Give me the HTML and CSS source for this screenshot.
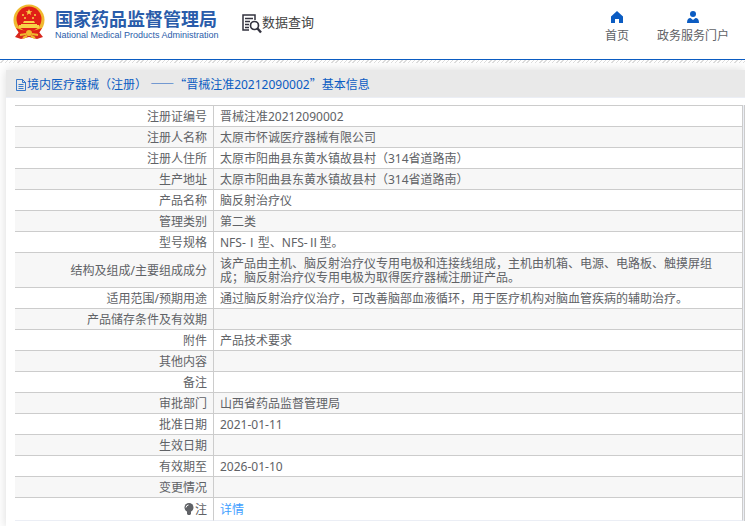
FILE: index.html
```html
<!DOCTYPE html>
<html lang="zh-CN">
<head>
    <meta charset="UTF-8">
    <title>国家药品监督管理局 数据查询</title>
    <link rel="stylesheet" href="styles.css">
</head>
<body>
    <header class="header">
        <a class="brand" href="#">
            <svg class="emblem" viewBox="0 0 34 36">
                <path d="M7 28 L3 33 L9 35 L17 33 L25 35 L31 33 L27 28 Z" fill="#d8261c"/>
                <circle cx="17" cy="16" r="15.500" fill="#f0b92f"/>
                <circle cx="17" cy="15" r="12.500" fill="#e01f17"/>
                <path d="M17 5 l1 2.200 h2.400 l-2 1.500 .8 2.400 -2.200 -1.500 -2.200 1.500 .8 -2.400 -2 -1.500 h2.400z" fill="#f8d348"/>
                <g fill="#f8d348">
                    <circle cx="11" cy="11" r="1"/>
                    <circle cx="23" cy="11" r="1"/>
                    <circle cx="13" cy="14" r="1"/>
                    <circle cx="21" cy="14" r="1"/>
                    <path d="M12 17 h10 l1 2 h-12z M9 20 h16 v1 h2 v3 h-20 v-3 h2z"/>
                </g>
                <path d="M4 24 Q17 30 30 24 L27 29 Q17 33 7 29 Z" fill="#e01f17"/>
                <circle cx="17" cy="29" r="3" fill="#f0b92f"/>
                <path d="M8 31 L14 30 M20 30 L26 31 M11 34 L15 32 M19 32 L23 34" stroke="#f0b92f" stroke-width="2"/>
            </svg>
            <span class="brand-text">
                <span class="brand-zh">国家药品监督管理局</span>
                <span class="brand-en">National Medical Products Administration</span>
            </span>
        </a>
        <a class="query" href="#">
            <svg class="query-icon" viewBox="0 0 20 20" fill="none" stroke="#33333f">
                <path d="M7 16 H1 V1 H13 V6" stroke-width="1.500"/>
                <path d="M3 4.500 H11 M3 7.500 H8 M3 10.500 H7 M3 13.500 H7" stroke-width="1.300"/>
                <circle cx="12.500" cy="11.500" r="4" stroke-width="1.700"/>
                <path d="M15.500 14.500 L19 18.500" stroke-width="2.400"/>
            </svg>
            <span>数据查询</span>
        </a>
        <nav class="nav">
            <a href="#">
                <svg viewBox="0 0 12 12"><path d="M6 0 L12 5.500 V12 H8 V8 H4 V12 H0 V5.500 Z" fill="#0b5cc2"/></svg>
                <span>首页</span>
            </a>
            <a href="#">
                <svg viewBox="0 0 12 12"><circle cx="6" cy="3" r="3" fill="#0b5cc2"/><path d="M0 12 Q0 7 3.500 7 L6 9 L8.500 7 Q12 7 12 12 Z" fill="#0b5cc2"/></svg>
                <span>政务服务门户</span>
            </a>
        </nav>
    </header>
    <div class="stripe"></div>

    <main class="card">
        <h1 class="title">
            <svg class="doc-icon" viewBox="0 0 12 12" fill="none" stroke="#0b5cc2">
                <path d="M1.500 .5 H7.500 L10.500 3.500 V11.500 H1.500 Z M7.500 .5 V3.500 H10.500 M3.500 5.500 H8.500 M3.500 7.500 H8.500 M3.500 9.500 H8.500" stroke-width=".8"/>
            </svg>
            <span>境内医疗器械（注册） <span class="zh">——“</span>晋械注准20212090002<span class="zh">”</span>基本信息</span>
        </h1>
        <div class="table-wrap">
            <table class="info">
                <tr><th scope="row">注册证编号</th><td>晋械注准20212090002</td></tr>
                <tr><th scope="row">注册人名称</th><td>太原市怀诚医疗器械有限公司</td></tr>
                <tr><th scope="row">注册人住所</th><td>太原市阳曲县东黄水镇故县村（314省道路南）</td></tr>
                <tr><th scope="row">生产地址</th><td>太原市阳曲县东黄水镇故县村（314省道路南）</td></tr>
                <tr><th scope="row">产品名称</th><td>脑反射治疗仪</td></tr>
                <tr><th scope="row">管理类别</th><td>第二类</td></tr>
                <tr><th scope="row">型号规格</th><td>NFS-Ⅰ型、NFS-Ⅱ型。</td></tr>
                <tr><th scope="row">结构及组成/主要组成成分</th><td>该产品由主机、脑反射治疗仪专用电极和连接线组成，主机由机箱、电源、电路板、触摸屏组成；脑反射治疗仪专用电极为取得医疗器械注册证产品。</td></tr>
                <tr><th scope="row">适用范围/预期用途</th><td>通过脑反射治疗仪治疗，可改善脑部血液循环，用于医疗机构对脑血管疾病的辅助治疗。</td></tr>
                <tr><th scope="row">产品储存条件及有效期</th><td></td></tr>
                <tr><th scope="row">附件</th><td>产品技术要求</td></tr>
                <tr><th scope="row">其他内容</th><td></td></tr>
                <tr><th scope="row">备注</th><td></td></tr>
                <tr><th scope="row">审批部门</th><td>山西省药品监督管理局</td></tr>
                <tr><th scope="row">批准日期</th><td>2021-01-11</td></tr>
                <tr><th scope="row">生效日期</th><td></td></tr>
                <tr><th scope="row">有效期至</th><td>2026-01-10</td></tr>
                <tr><th scope="row">变更情况</th><td></td></tr>
                <tr class="note">
                    <th scope="row"><svg class="bulb" viewBox="0 0 10 12"><circle cx="5" cy="4.500" r="4.500" fill="#606266"/><path d="M3 8 H7 V11 L6 12 H4 L3 11 Z" fill="#606266"/><path d="M2 4.500 Q2.300 2.200 4.500 2" fill="none" stroke="#fff"/></svg>注</th>
                    <td><a href="#">详情</a></td>
                </tr>
            </table>
        </div>
    </main>
</body>
</html>
```
FILE: styles.css
```css
body {
    margin: 0;
    background-color: #fff;
    color: #606266;
    font-family: "Noto Sans", "Noto Sans CJK SC", sans-serif;
    font-size: 12px;
    line-height: 14px;
    overflow-x: hidden;
}
a {
    text-decoration: none;
    color: inherit;
}
.header {
    display: flex;
    align-items: flex-start;
    box-sizing: border-box;
    height: 60px;
    padding: 4px 16px 0 12px;
    border-bottom: 1px solid #0b5cc2;
}
.brand {
    display: flex;
    color: #2a5caa;
}
.emblem {
    width: 34px;
    height: 36px;
}
.brand-text {
    display: flex;
    flex-direction: column;
    width: 162px;
    padding: 4px 0 0 9px;
    white-space: nowrap;
}
.brand-zh {
    font-family: "Noto Sans CJK SC", sans-serif;
    font-size: 18px;
    line-height: 20px;
    font-weight: bold;
}
.brand-en {
    font-family: "Liberation Sans", sans-serif;
    font-size: 9px;
    line-height: 14px;
}
.query {
    display: flex;
    align-items: center;
    margin: 6px 0 0 25px;
    font-size: 13px;
    line-height: 22px;
    color: #444;
}
.query-icon {
    width: 20px;
    height: 20px;
    margin-top: 4px;
}
.nav {
    display: flex;
    gap: 28px;
    margin: 7px 0 0 auto;
}
.nav a {
    display: flex;
    flex-direction: column;
    align-items: center;
    gap: 4px;
    line-height: 18px;
}
.nav svg {
    width: 12px;
    height: 12px;
}
.stripe {
    height: 3px;
    background: repeating-linear-gradient(135deg, #fff 0, #fff 2px, #ddd 2px, #ddd 3px);
}
.card {
    margin: 7px 0 0 6px;
    padding-bottom: 6px;
    box-shadow: 0 0 10px rgba(0, 0, 0, 0.15);
    background-color: #fff;
}
.title {
    display: flex;
    align-items: center;
    box-sizing: border-box;
    margin: 0;
    height: 28px;
    padding: 2px 9px 0;
    background-color: #e9e9e9;
    border-bottom: 1px solid #ebeef5;
    color: #0b5cc2;
    font-size: 12px;
    line-height: 16px;
    font-weight: normal;
}
.zh {
    font-family: "Noto Sans CJK SC", sans-serif;
}
.doc-icon {
    width: 12px;
    height: 12px;
}
.table-wrap {
    margin: 7px 0 0 9px;
    padding-right: 1px;
    border-right: 1px solid #ccc;
    background-color: #ebeef5;
}
.info {
    width: 100%;
    border-collapse: separate;
    border-spacing: 0;
    border-top: 1px solid #ccc;
    background-color: #fff;
}
.info th,
.info td {
    height: 14px;
    padding: 4px 6px 2px;
    border-right: 1px solid #ccc;
    border-bottom: 1px solid #ccc;
    font-weight: normal;
}
.info th {
    box-sizing: border-box;
    width: 199px;
    text-align: right;
}
.info td {
    padding-right: 24px;
    text-align: left;
}
.info tr:nth-child(even) {
    background-color: #f7f7f7;
}
.info .note th,
.info .note td {
    height: 16px;
    border-bottom-color: #ebeef5;
}
.note a {
    color: #409eff;
}
.bulb {
    width: 10px;
    height: 12px;
    margin-right: 1px;
    vertical-align: -1px;
}
```
